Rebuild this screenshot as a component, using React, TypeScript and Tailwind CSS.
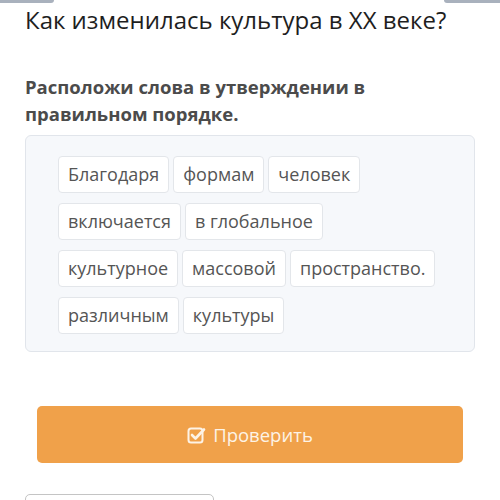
import React from "react";

const rows = [
  ["Благодаря", "формам", "человек"],
  ["включается", "в глобальное"],
  ["культурное", "массовой", "пространство."],
  ["различным", "культуры"],
];

export default function App() {
  return (
    <div
      className="w-[500px] h-[500px] overflow-hidden bg-white relative"
      style={{ fontFamily: '"Open Sans", "Noto Sans", sans-serif' }}
    >
      <div className="flex justify-between h-[3px]">
        <div className="w-[54px] h-[3px] bg-[#a9b1bd] rounded-br-[3px]" />
        <div className="w-[56px] h-[3px] bg-[#a9b1bd] rounded-bl-[3px]" />
      </div>
      <div className="px-[25px]">
        <div className="text-[24px] leading-[30px] text-[#1e1e1e] mt-[2px]">
          Как изменилась культура в XX веке?
        </div>
        <div className="mt-[38px] text-[18.5px] leading-[27px] font-bold text-[#4b4b4b]">
          Расположи слова в утверждении в
          <br />
          правильном порядке.
        </div>
        <div className="mt-[8px] h-[217px] rounded-[6px] border border-[#e1e5eb] bg-[#f6f8fb] pl-[32px] pt-[20px] flex flex-col gap-[10px]">
          {rows.map((r, i) => (
            <div key={i} className="flex gap-[4px]">
              {r.map((w) => (
                <div
                  key={w}
                  className="h-[37px] px-[9px] flex items-center bg-white border border-[#e3e6ea] rounded-[4px] text-[18px] text-[#555555]"
                >
                  {w}
                </div>
              ))}
            </div>
          ))}
        </div>
        <div className="mt-[54px] mx-[12px] h-[57px] rounded-[5px] bg-[#f0a14a] flex items-center justify-center gap-[6px] text-[18.5px] text-[#fdf3e6]">
          <svg width="20" height="18" viewBox="0 0 20 18" fill="none">
            <rect x="1.5" y="2.5" width="14" height="14" rx="2.5" stroke="#fdf3e6" strokeWidth="2" />
            <path d="M5 9 L8.5 12.5 L17 3.5" stroke="#fdf3e6" strokeWidth="2.6" strokeLinecap="round" strokeLinejoin="round" />
          </svg>
          <span>Проверить</span>
        </div>
        <div className="mt-[31px] w-[189px] h-[20px] border border-[#c4c4c4] rounded-t-[5px]" />
      </div>
    </div>
  );
}
